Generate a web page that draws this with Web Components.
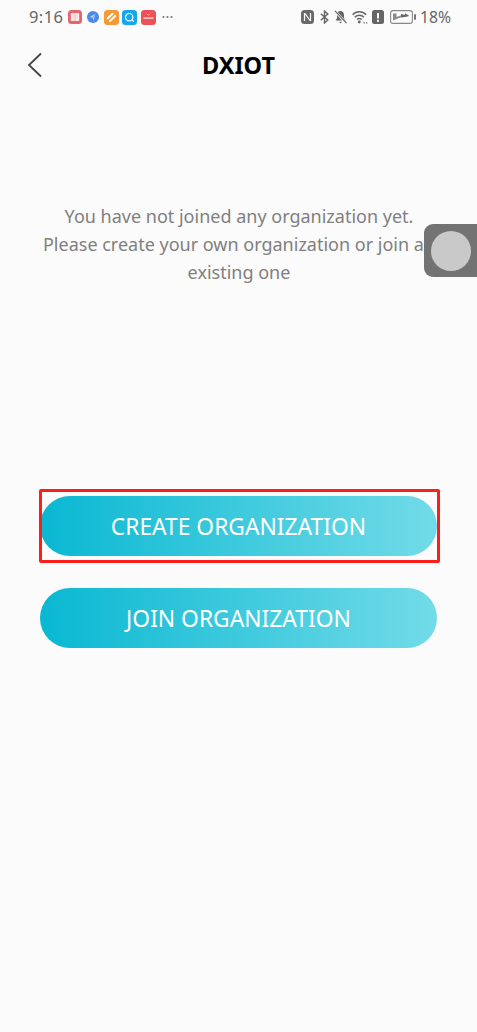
<!DOCTYPE html>
<html>
<head>
<meta charset="utf-8">
<style>
  html, body { margin: 0; height: 100%; background: #fbfbfb; }
  body { font-family: "Noto Sans", "Open Sans", sans-serif; overflow: hidden; }
</style>
</head>
<body>
<org-screen>
  <status-bar slot="status"></status-bar>
  <nav-header slot="header" title="DXIOT"></nav-header>
  <span slot="message">You have not joined any organization yet.</span>
  <span slot="message">Please create your own organization or join an existing one</span>
  <grad-button slot="actions" marked>CREATE ORGANIZATION</grad-button>
  <grad-button slot="actions">JOIN ORGANIZATION</grad-button>
</org-screen>
<float-ball></float-ball>

<script>
class StatusBar extends HTMLElement {
  constructor() {
    super();
    this.attachShadow({ mode: 'open' });
    this.shadowRoot.innerHTML = `
      <style>
        :host { display: flex; align-items: center; height: 34px; padding: 0 26px 0 29px; color: #666; }
        .time { font-size: 16.500px; line-height: 34px; letter-spacing: .4px; width: 39px; }
        .apps { display: flex; align-items: center; }
        .sys { margin-left: auto; display: flex; align-items: center; }
        .pct { font-size: 15.700px; margin-left: 4px; }
        svg { display: block; }
      </style>
      <span class="time">9:16</span>
      <span class="apps">
        <svg width="14" height="14" viewBox="0 0 14 14"><rect width="14" height="14" rx="3.500" fill="#e2666e"/><rect x="2.800" y="3" width="8.400" height="8" rx=".8" fill="#fbe6e6"/><path d="M7 3v8" stroke="#e2a0a4" stroke-width=".7"/></svg>
        <svg width="12" height="12" viewBox="0 0 12 12" style="margin-left:5px"><circle cx="6" cy="6" r="6" fill="#4a8be6"/><path d="M8.500 2.500 2.800 6l3 .8.700 3.200z" fill="#bcd6f8"/><path d="M8.500 2.500 5.800 6.800" stroke="#4a8be6" stroke-width=".6"/></svg>
        <svg width="15" height="15" viewBox="0 0 15 15" style="margin-left:5px"><rect width="15" height="15" rx="3.500" fill="#f59a37"/><path d="M3.800 8.200 8.600 3.800M6 11l5.200-5" stroke="#fff" stroke-width="2" stroke-linecap="round"/></svg>
        <svg width="15" height="15" viewBox="0 0 15 15" style="margin-left:3px"><rect width="15" height="15" rx="3.500" fill="#14a6f0"/><circle cx="7.200" cy="7.200" r="3.700" fill="none" stroke="#fff" stroke-width="1.200"/><path d="m9.800 9.800 2 1.800" stroke="#fff" stroke-width="1.200"/></svg>
        <svg width="15" height="15" viewBox="0 0 15 15" style="margin-left:4px"><rect width="15" height="15" rx="3.500" fill="#ec5158"/><path d="M5.800 3.800l1.700 1.500 1.700-1.500" stroke="#fbc" stroke-width=".8" fill="none"/><rect x="2.500" y="7.500" width="10" height="1.300" fill="#fdd"/></svg>
        <svg width="11" height="4" viewBox="0 0 11 4" style="margin-left:6px"><g fill="#777"><circle cx="1.500" cy="2" r="1.100"/><circle cx="5.500" cy="2" r="1.100"/><circle cx="9.500" cy="2" r="1.100"/></g></svg>
      </span>
      <span class="sys">
        <svg width="13" height="14" viewBox="0 0 13 14"><rect width="13" height="14" rx="3.500" fill="#6a6a6a"/><path d="M3.500 3v8M9.500 3v8M4 3.500l5 7" stroke="#fbfbfb" stroke-width="1.200" fill="none"/></svg>
        <svg width="9" height="14" viewBox="0 0 9 14" style="margin-left:6px"><path d="M.8 3.800 7.800 10 4.500 13V1l3.300 3L.8 10.200" stroke="#666" stroke-width="1.400" fill="none"/></svg>
        <svg width="13" height="14" viewBox="0 0 13 14" style="margin-left:5px"><path d="M6.500 1c2.400 0 3.500 1.900 3.500 4.200v3l1.500 2.300h-10L3 8.200v-3C3 2.900 4.100 1 6.500 1zM5 11.800h3L6.500 13.500z" fill="#666"/><path d="M.5 .5 12.500 13.500" stroke="#fbfbfb" stroke-width="2.600"/><path d="M1 .8 12.500 13.200" stroke="#666" stroke-width="1.200"/></svg>
        <svg width="16" height="14" viewBox="0 0 16 14" style="margin-left:5px"><path d="M.6 4.700c3.700-4 9.800-4 13.500 0M2.800 7.200c2.600-2.600 6.500-2.600 9.100 0M5 9.600c1.400-1.300 3.300-1.300 4.700 0" stroke="#666" stroke-width="1.400" fill="none"/><circle cx="7.300" cy="12" r="1.400" fill="#666"/><path d="M11.500 12.800h1.300M14 12.800h1.300" stroke="#666" stroke-width="1.300"/></svg>
        <svg width="12" height="14" viewBox="0 0 12 14" style="margin-left:4px"><rect width="12" height="14" rx="2.500" fill="#666"/><rect x="5" y="3" width="2" height="5.500" fill="#fbfbfb"/><rect x="5" y="9.800" width="2" height="2" fill="#fbfbfb"/></svg>
        <svg width="26" height="14" viewBox="0 0 26 14" style="margin-left:6px"><rect x=".6" y=".6" width="21.800" height="12.800" rx="2.500" fill="none" stroke="#888" stroke-width="1.100"/><path d="M3 3.500h3.500V7l5-1.800V7L3 10.500z" fill="#8a8a8a"/><path d="M11 7.500V4l4 1V3.200L19.500 6 15 7z" fill="#666"/><rect x="24" y="4" width="2" height="6" rx="1" fill="#777"/></svg>
        <span class="pct">18%</span>
      </span>`;
  }
}

class NavHeader extends HTMLElement {
  constructor() {
    super();
    this.attachShadow({ mode: 'open' });
  }
  connectedCallback() {
    this.shadowRoot.innerHTML = `
      <style>
        :host { display: grid; grid-template-columns: 1fr auto 1fr; align-items: center; height: 62px; }
        .back { padding-left: 27px; display: flex; }
        h1 { margin: 0; font: 700 23.500px/62px "Noto Sans", sans-serif; color: #000; }
      </style>
      <span class="back">
        <svg width="16" height="26" viewBox="0 0 16 26"><path d="M14 1.500 2 13l12 11.500" fill="none" stroke="#444" stroke-width="1.800"/></svg>
      </span>
      <h1>${this.getAttribute('title')}</h1>
      <span></span>`;
  }
}

class GradButton extends HTMLElement {
  constructor() {
    super();
    this.attachShadow({ mode: 'open' });
    this.shadowRoot.innerHTML = `
      <style>
        :host { display: block; position: relative; }
        .pill {
          height: 60px; border-radius: 30px; color: #fff;
          display: flex; align-items: center; justify-content: center;
          font-size: 22.800px;
          background: linear-gradient(90deg, #09b8d2, #72dbe8);
        }
        .mark { display: none; position: absolute; left: -1px; right: -3px; top: -7px; bottom: -7px; border: 3px solid #fa1f1a; border-radius: 2px; }
        :host([marked]) .mark { display: block; }
      </style>
      <div class="pill"><slot></slot></div>
      <div class="mark"></div>`;
  }
}

class FloatBall extends HTMLElement {
  constructor() {
    super();
    this.attachShadow({ mode: 'open' });
    this.shadowRoot.innerHTML = `
      <style>
        :host { position: absolute; left: 424px; top: 224px; width: 53px; height: 53px; background: #737373; border-radius: 9px 0 0 9px; display: flex; align-items: center; justify-content: center; }
        i { width: 40px; height: 40px; border-radius: 50%; background: #c9c9c9; display: block; }
      </style>
      <i></i>`;
  }
}

class OrgScreen extends HTMLElement {
  constructor() {
    super();
    this.attachShadow({ mode: 'open' });
    this.shadowRoot.innerHTML = `
      <style>
        :host { display: flex; flex-direction: column; height: 1032px; background: #fbfbfb; }
        .msg { margin: 106px 0 0; padding: 0 38px 0 39px; display: flex; flex-direction: column; text-align: center; font-size: 18px; line-height: 28px; color: #808080; height: 294px; }
        .actions { display: flex; flex-direction: column; gap: 32px; padding: 0 40px; }
      </style>
      <slot name="status"></slot>
      <slot name="header"></slot>
      <div class="msg"><slot name="message"></slot></div>
      <div class="actions"><slot name="actions"></slot></div>`;
  }
}

customElements.define('status-bar', StatusBar);
customElements.define('nav-header', NavHeader);
customElements.define('grad-button', GradButton);
customElements.define('float-ball', FloatBall);
customElements.define('org-screen', OrgScreen);
</script>
</body>
</html>
